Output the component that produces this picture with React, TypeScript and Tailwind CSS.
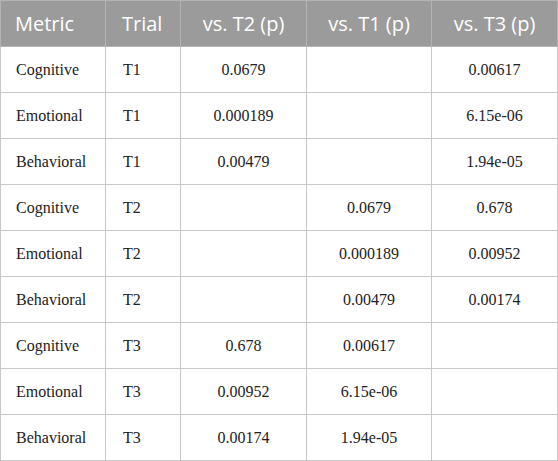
import React from "react";

const rows: [string, string, string, string, string][] = [
  ["Cognitive", "T1", "0.0679", "", "0.00617"],
  ["Emotional", "T1", "0.000189", "", "6.15e-06"],
  ["Behavioral", "T1", "0.00479", "", "1.94e-05"],
  ["Cognitive", "T2", "", "0.0679", "0.678"],
  ["Emotional", "T2", "", "0.000189", "0.00952"],
  ["Behavioral", "T2", "", "0.00479", "0.00174"],
  ["Cognitive", "T3", "0.678", "0.00617", ""],
  ["Emotional", "T3", "0.00952", "6.15e-06", ""],
  ["Behavioral", "T3", "0.00174", "1.94e-05", ""],
];

const widths = ["w-[105px]", "w-[75px]", "w-[126px]", "w-[125px]", "w-[126px]"];

export default function App() {
  return (
    <div className="w-[558px] h-[461px] bg-white">
      <table className="border-collapse table-fixed w-[557px]">
        <colgroup>
          {widths.map((w, i) => (
            <col key={i} className={w} />
          ))}
        </colgroup>
        <thead>
          <tr className="h-[46px] bg-[#9b9b9b] text-white text-[20px] font-[Open_Sans,sans-serif]">
            <th className="text-left font-normal px-[14px] border border-[#b3b3b3]">Metric</th>
            <th className="text-left font-normal px-[16px] border border-[#b3b3b3]">Trial</th>
            <th className="text-center font-normal border border-[#b3b3b3]">vs. T2 (p)</th>
            <th className="text-center font-normal border border-[#b3b3b3]">vs. T1 (p)</th>
            <th className="text-center font-normal border border-[#b3b3b3]">vs. T3 (p)</th>
          </tr>
        </thead>
        <tbody className="text-[16px] text-[#222] font-[Liberation_Serif,serif]">
          {rows.map((r, i) => (
            <tr key={i} className="h-[46px]">
              <td className="text-left px-[15px] border border-[#c8c8c8]">{r[0]}</td>
              <td className="text-left px-[17px] border border-[#c8c8c8]">{r[1]}</td>
              <td className="text-center border border-[#c8c8c8]">{r[2]}</td>
              <td className="text-center border border-[#c8c8c8]">{r[3]}</td>
              <td className="text-center border border-[#c8c8c8]">{r[4]}</td>
            </tr>
          ))}
        </tbody>
      </table>
    </div>
  );
}
